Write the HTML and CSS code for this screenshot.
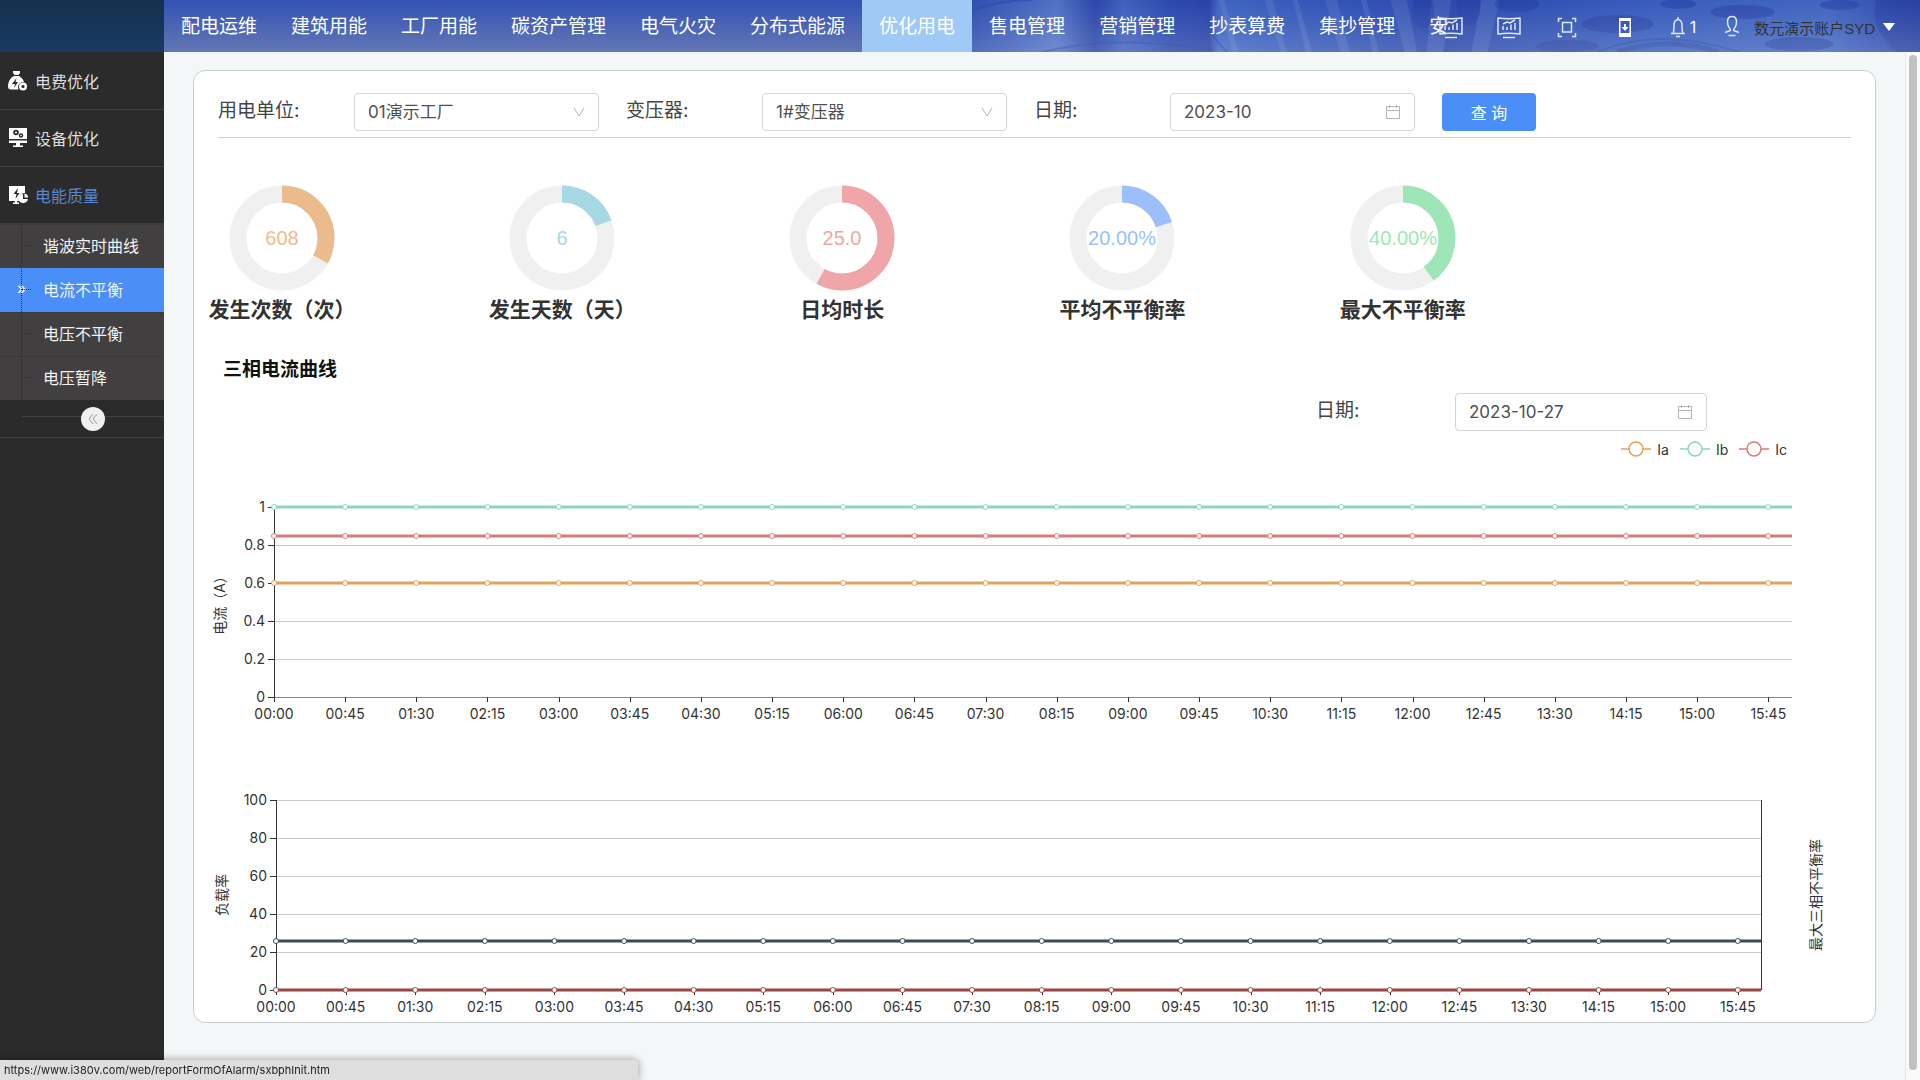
FILE: index.html
```
<!DOCTYPE html>
<html lang="zh-CN">
<head>
    <meta charset="UTF-8">
    <meta name="viewport" content="width=device-width, initial-scale=1.0">
    <title>电流不平衡</title>
    <link rel="stylesheet" href="styles.css">
</head>
<body>
    <header class="header">
        <div class="logo"></div>
        <div class="header-bar">
            <svg class="header-art" viewBox="0 0 940 52" preserveAspectRatio="none" aria-hidden="true">
                <defs>
                    <linearGradient id="artBase" x1="0" y1="0" x2="1" y2="0">
                        <stop offset="0" stop-color="#3554b4"/>
                        <stop offset="0.09" stop-color="#6285d2"/>
                        <stop offset="0.13" stop-color="#2c48aa"/>
                        <stop offset="0.16" stop-color="#4a6cc6"/>
                        <stop offset="0.21" stop-color="#2c4db2"/>
                        <stop offset="0.25" stop-color="#2b42a8"/>
                        <stop offset="0.26" stop-color="#4a74cc"/>
                        <stop offset="0.34" stop-color="#3d62c2"/>
                        <stop offset="0.5" stop-color="#2c4ab0"/>
                        <stop offset="0.7" stop-color="#3f66c4"/>
                        <stop offset="0.9" stop-color="#4d74cb"/>
                        <stop offset="1" stop-color="#3046a5"/>
                    </linearGradient>
                    <linearGradient id="artShade" x1="0" y1="0" x2="0" y2="1">
                        <stop offset="0" stop-color="#2440a8" stop-opacity="0.3"/>
                        <stop offset="1" stop-color="#8c9ccc" stop-opacity="0.35"/>
                    </linearGradient>
                </defs>
                <rect width="940" height="52" fill="url(#artBase)"/>
                <g fill="#a9bdea" opacity="0.2">
                    <path d="M245 0h5l14 52h-6z"/>
                    <path d="M290 0h8l14 52h-6z"/>
                    <path d="M318 0h5l14 52h-6z"/>
                    <path d="M350 0h12l12 52h-9z"/>
                    <path d="M386 0h5l12 52h-6z"/>
                    <path d="M415 0h16l10 52h-12z"/>
                    <path d="M455 0h20l-8 52h-16z"/>
                    <path d="M505 0h18l-12 52h-16z"/>
                </g>
                <g fill="#243c9e" opacity="0.5">
                    <ellipse cx="447" cy="10" rx="11" ry="18"/>
                    <ellipse cx="492" cy="8" rx="12" ry="17"/>
                    <ellipse cx="540" cy="4" rx="22" ry="8"/>
                    <ellipse cx="640" cy="24" rx="36" ry="9"/>
                    <ellipse cx="590" cy="46" rx="32" ry="6"/>
                    <ellipse cx="764" cy="12" rx="32" ry="7"/>
                    <ellipse cx="700" cy="4" rx="18" ry="5"/>
                    <ellipse cx="820" cy="44" rx="34" ry="7"/>
                    <ellipse cx="860" cy="5" rx="20" ry="5"/>
                    <path d="M896 0h44v52h-22q-28-20-22-52z"/>
                </g>
                <g fill="none" stroke="#253f9f" stroke-width="2" opacity="0.45">
                    <path d="M70 52q70-18 170-2"/>
                    <path d="M225 0q8 34 28 52"/>
                    <path d="M620 52q60-26 140 0"/>
                    <path d="M640 52q50-16 100 0" stroke-width="5"/>
                    <path d="M0 10q30-10 60-10"/>
                </g>
                <rect width="940" height="52" fill="url(#artShade)"/>
            </svg>
            <nav class="top-nav">
                <a href="#">配电运维</a>
                <a href="#">建筑用能</a>
                <a href="#">工厂用能</a>
                <a href="#">碳资产管理</a>
                <a href="#">电气火灾</a>
                <a href="#">分布式能源</a>
                <a href="#" class="active">优化用电</a>
                <a href="#">售电管理</a>
                <a href="#">营销管理</a>
                <a href="#">抄表算费</a>
                <a href="#">集抄管理</a>
                <a href="#">安</a>
            </nav>
            <div class="tools">
                <a href="#" class="tool" aria-label="大屏一">
                    <svg viewBox="0 0 24 24"><use href="#icon-screen"/></svg>
                </a>
                <a href="#" class="tool" aria-label="大屏二">
                    <svg viewBox="0 0 24 24"><use href="#icon-screen"/></svg>
                </a>
                <a href="#" class="tool" aria-label="全屏">
                    <svg viewBox="0 0 24 24"><path d="M3.5 7V3.5H7M17 3.5h3.500V7M20.500 18v3.500H17M7 21.500H3.500V18M7.500 7.500h9v9.500h-9z"/></svg>
                </a>
                <a href="#" class="tool" aria-label="下载">
                    <svg viewBox="0 0 24 24"><path class="solid" fill-rule="evenodd" d="M6 3h12v19H6zM7.500 6v12h9V6z"/><path class="solid" d="M11 9h2v3h2.500L12 16l-3.500-4H11z"/></svg>
                </a>
                <a href="#" class="bell" aria-label="告警">
                    <svg viewBox="0 0 14 24"><path d="M7 2v2.500M0 18.500h14M2 18.500q1-2 1-8 0-5.500 4-6 4 .5 4 6 0 6 1 8M5 21.500h4"/></svg>
                    <span>1</span>
                </a>
                <a href="#" class="user">
                    <svg viewBox="0 0 16 24"><path d="M6.300 14C4 12 3.500 9.500 3.500 6.500 3.500 3 5.500 1.500 8 1.500s4.500 1.500 4.500 5c0 3-.5 5.500-2.800 7.500M6.300 14v1.500L1 17.500M9.700 14v1.500l5.300 2M4.500 20.500h7"/></svg>
                    <span class="user-name">数元演示账户SYD</span>
                    <i class="caret"></i>
                </a>
            </div>
        </div>
    </header>

    <div class="layout">
        <aside class="sidebar">
            <ul class="menu">
                <li>
                    <a href="#" class="menu-item">
                        <svg viewBox="0 0 20 20"><path d="M5 0h7v2l-1.500 2h-4L5 2z"/><path d="M6 5h5c3 2 4.500 4 5 6-4-.5-7 3-5.500 7.500H3c-2 0-3-1-3-3C0 11 2 7 6 5z"/><path class="cut" d="M8.500 7L4 13h3l-1 4 4-6H7.500z"/><circle cx="15" cy="15.500" r="4"/><circle class="cut" cx="15" cy="15.500" r="1.600"/></svg>
                        <span>电费优化</span>
                    </a>
                </li>
                <li>
                    <a href="#" class="menu-item">
                        <svg viewBox="0 0 20 20"><path d="M1 0h18v11H1zM1 12.500h18V15h-7v2.500h3V19H5v-1.500h3V15H1z"/><circle class="cut" cx="8" cy="4.500" r="2.800"/><circle cx="8" cy="4.500" r="1"/><circle class="cut" cx="13" cy="7.500" r="2.200"/><circle cx="13" cy="7.500" r=".8"/></svg>
                        <span>设备优化</span>
                    </a>
                </li>
                <li>
                    <a href="#" class="menu-item current">
                        <svg viewBox="0 0 20 20"><path d="M1 1h16v7c-5 0-7.500 4-6 8H9v1.500h2V19H5v-1.500h2V16H1z"/><path class="cut" d="M10 3L5.500 9h3l-1 5 4-6H9z"/><path d="M15 9v5h5a5 4.500 0 1 1-5-5z"/><path d="M16.500 8.500a4 4 0 0 1 3.500 4h-3.500z"/></svg>
                        <span>电能质量</span>
                    </a>
                    <ul class="submenu">
                        <li><a href="#">谐波实时曲线</a></li>
                        <li class="active"><a href="#">电流不平衡</a><span class="mark">»</span></li>
                        <li><a href="#">电压不平衡</a></li>
                        <li><a href="#">电压暂降</a></li>
                    </ul>
                </li>
            </ul>
            <div class="collapse">
                <button type="button" aria-label="收起菜单">
                    <svg viewBox="0 0 12 12"><path d="M6 1L2 6l4 5M10 1L6 6l4 5"/></svg>
                </button>
            </div>
        </aside>

        <main class="main">
            <div class="card">
                <form class="filters">
                    <label for="unit">用电单位:</label>
                    <div class="field">
                        <select id="unit"><option>01演示工厂</option></select>
                        <svg class="arrow" viewBox="0 0 12 12"><path d="M1 2l5 8 5-8"/></svg>
                    </div>
                    <label for="transformer">变压器:</label>
                    <div class="field">
                        <select id="transformer"><option>1#变压器</option></select>
                        <svg class="arrow" viewBox="0 0 12 12"><path d="M1 2l5 8 5-8"/></svg>
                    </div>
                    <label for="month">日期:</label>
                    <div class="field">
                        <input type="text" id="month" value="2023-10">
                        <svg class="calendar" viewBox="0 0 16 16"><path d="M1.500 2.500h13v12h-13zM1.500 6.500h13M4.500 1v3M11.500 1v3"/></svg>
                    </div>
                    <button type="button">查 询</button>
                </form>

                <div class="stats" id="stats"></div>

                <h2>三相电流曲线</h2>

                <div class="day-row">
                    <label for="day">日期:</label>
                    <div class="field">
                        <input type="text" id="day" value="2023-10-27">
                        <svg class="calendar" viewBox="0 0 16 16"><path d="M1.500 2.500h13v12h-13zM1.500 6.500h13M4.500 1v3M11.500 1v3"/></svg>
                    </div>
                </div>

                <div class="legend">
                    <span class="ia"><svg viewBox="0 0 30 20"><path d="M0 10h30"/><circle cx="15" cy="10" r="7"/></svg>Ia</span>
                    <span class="ib"><svg viewBox="0 0 30 20"><path d="M0 10h30"/><circle cx="15" cy="10" r="7"/></svg>Ib</span>
                    <span class="ic"><svg viewBox="0 0 30 20"><path d="M0 10h30"/><circle cx="15" cy="10" r="7"/></svg>Ic</span>
                </div>

                <svg class="chart" id="currentChart"></svg>
                <svg class="chart" id="loadChart"></svg>
            </div>
        </main>
        <div class="scrollbar"><div class="thumb"></div></div>
    </div>

    <div class="status">https://www.i380v.com/web/reportFormOfAlarm/sxbphInit.htm</div>

    <svg class="sprite" aria-hidden="true">
        <symbol id="icon-screen" viewBox="0 0 24 24">
            <path d="M1 3q11 1.500 22 0v16q-11-1.500-22 0zM6 22.500h12M6 15v-4M10 15v-3M14 15V9.500M18 15V8M6 9l4-2 3 1 5-3"/>
        </symbol>
    </svg>

    <script>
        var stats = [
            { name: "发生次数（次）", value: "608", ratio: 0.33, color: "#ecbb8d" },
            { name: "发生天数（天）", value: "6", ratio: 0.195, color: "#a6d9e4" },
            { name: "日均时长", value: "25.0", ratio: 0.58, color: "#f0a6a8" },
            { name: "平均不平衡率", value: "20.00%", ratio: 0.2, color: "#9bbffa" },
            { name: "最大不平衡率", value: "40.00%", ratio: 0.4, color: "#9ee6b8" }
        ];

        function drawStats() {
            var html = "";
            var len = 2 * Math.PI * 44;
            stats.forEach(function(item) {
                html += `<div class="stat">
                    <svg viewBox="0 0 106 106">
                        <circle class="ring" cx="53" cy="53" r="44"/>
                        <circle class="ring" cx="53" cy="53" r="44" style="stroke:${item.color}" stroke-dasharray="${item.ratio * len} ${len}" transform="rotate(-90 53 53)"/>
                        <text x="53" y="60" style="fill:${item.color}">${item.value}</text>
                    </svg>
                    <p>${item.name}</p>
                </div>`;
            });
            document.getElementById("stats").innerHTML = html;
        }

        // one point every 15 minutes, 00:00 - 16:00
        var steps = 64;

        function timeLabel(i) {
            var m = i * 15;
            return String(Math.floor(m / 60)).padStart(2, "0") + ":" + String(m % 60).padStart(2, "0");
        }

        function drawChart(id, opt) {
            var svg = document.getElementById(id);
            var left = opt.left;
            var right = svg.clientWidth - opt.right;
            var top = opt.top;
            var bottom = top + 190;
            var mid = (top + bottom) / 2;
            var out = "";

            opt.ticks.forEach(function(t, i) {
                var y = Math.round(bottom - 190 * i / (opt.ticks.length - 1));
                if (i > 0) {
                    out += `<path class="grid" d="M${left} ${y}H${right}"/>`;
                }
                out += `<path class="axis" d="M${left - 6} ${y}H${left}"/>`;
                out += `<text class="y-label" x="${left - 9}" y="${y + 5}">${t}</text>`;
            });

            out += `<path class="base" d="M${left} ${bottom}H${right}"/>`;
            out += `<path class="axis" d="M${left} ${top}V${bottom}"/>`;
            if (opt.rightName) {
                out += `<path class="axis" d="M${right} ${top}V${bottom}"/>`;
            }

            for (var i = 0; i < steps; i += 3) {
                var x = left + (right - left) * i / steps;
                out += `<path class="axis" d="M${Math.round(x)} ${bottom}v5"/>`;
                out += `<text class="x-label" x="${x}" y="${bottom + 22}">${timeLabel(i)}</text>`;
            }

            opt.series.forEach(function(s) {
                var y = Math.round(bottom - 190 * s.value / opt.max);
                out += `<g class="series" style="stroke:${s.color}"><path d="M${left} ${y}H${right}"/>`;
                for (var i = 0; i < steps; i += 3) {
                    out += `<circle cx="${left + (right - left) * i / steps}" cy="${y}" r="2.500"/>`;
                }
                out += `</g>`;
            });

            out += `<text class="x-label" transform="translate(${left - 49} ${mid}) rotate(-90)">${opt.leftName}</text>`;
            if (opt.rightName) {
                out += `<text class="x-label" transform="translate(${right + 60} ${mid}) rotate(-90)">${opt.rightName}</text>`;
            }
            svg.innerHTML = out;
        }

        function drawAll() {
            drawChart("currentChart", {
                left: 80, right: 83, top: 48, max: 1,
                ticks: ["0", "0.2", "0.4", "0.6", "0.8", "1"],
                leftName: "电流（A）",
                series: [
                    { value: 0.6, color: "#e3a159" },
                    { value: 1, color: "#8ad5c3" },
                    { value: 0.85, color: "#d97b7a" }
                ]
            });
            drawChart("loadChart", {
                left: 82, right: 114, top: 60, max: 100,
                ticks: ["0", "20", "40", "60", "80", "100"],
                leftName: "负载率",
                rightName: "最大三相不平衡率",
                series: [
                    { value: 0, color: "#984746" },
                    { value: 26, color: "#3b4b5a" }
                ]
            });
        }

        drawStats();
        drawAll();
        window.addEventListener("resize", drawAll);
    </script>
</body>
</html>
```

FILE: styles.css
```
* {
    box-sizing: border-box;
}
body {
    margin: 0;
    min-height: 100vh;
    display: flex;
    flex-direction: column;
    font-family: Inter, "Noto Sans CJK SC", sans-serif;
    font-size: 16px;
    color: #444;
    background-color: #f3f7f8;
}
a {
    color: inherit;
    text-decoration: none;
}
ul {
    list-style: none;
    margin: 0;
    padding: 0;
}

/* header */
.header {
    display: flex;
    height: 52px;
}
.logo {
    width: 164px;
    background: linear-gradient(#14304d, #1a3a63);
}
.header-bar {
    flex: 1;
    min-width: 0;
    position: relative;
    background: linear-gradient(#3352b4, #6377b5);
}
.header-art {
    position: absolute;
    right: 0;
    top: 0;
    width: 54%;
    height: 100%;
}
.top-nav {
    position: relative;
    display: flex;
    overflow: hidden;
}
.top-nav a {
    flex: none;
    height: 52px;
    padding: 0 17px;
    font-size: 19px;
    line-height: 54px;
    color: #fff;
}
.top-nav .active {
    background-color: #9fc9f6;
}
.tools {
    position: absolute;
    right: 25px;
    top: 0;
    height: 54px;
    display: flex;
    align-items: center;
    gap: 34px;
    color: #fff;
}
.tools svg {
    display: block;
    height: 24px;
    fill: none;
    stroke: #dfe6f7;
    stroke-width: 1.5;
}
.tools svg .solid {
    fill: #fff;
    stroke: none;
}
.bell, .user {
    display: flex;
    align-items: center;
}
.bell {
    gap: 5px;
    margin-right: -6px;
}
.user-name {
    margin: 0 8px 0 14px;
    white-space: nowrap;
    font-size: 15px;
    font-family: "Liberation Sans", "Noto Sans CJK SC", sans-serif;
    color: #333;
}
.caret {
    border: 6px solid transparent;
    border-top: 8px solid #fff;
    border-bottom: 0;
}

/* sidebar */
.layout {
    flex: 1;
    display: flex;
}
.sidebar {
    flex: none;
    width: 164px;
    background-color: #2b2b2b;
}
.menu {
    padding-top: 1px;
}
.menu > li + li {
    border-top: 1px solid #414141;
}
.menu-item {
    display: flex;
    align-items: center;
    gap: 7px;
    height: 56px;
    padding-left: 8px;
    color: #ddd;
}
.menu-item svg {
    width: 20px;
    height: 20px;
    fill: #fff;
}
.menu-item .cut {
    fill: #2b2b2b;
}
.menu-item.current {
    color: #5b87d2;
}
.submenu {
    padding-top: 1px;
    background-color: #413f40;
}
.submenu li {
    position: relative;
    height: 44px;
    line-height: 42px;
    padding-left: 43px;
    color: #f2f2f2;
    border-top: 1px solid #393738;
}
.submenu li::before {
    content: "";
    position: absolute;
    left: 21px;
    top: 0;
    height: 100%;
    border-left: 1px dotted #2b2b2b;
}
.submenu li::after {
    content: "";
    position: absolute;
    left: 21px;
    top: 20px;
    width: 10px;
    border-top: 1px dotted #2b2b2b;
}
.submenu .active {
    background-color: #498ff7;
    border-top-color: #498ff7;
}
.submenu .mark {
    position: absolute;
    left: 17px;
    top: -2px;
    color: #fff;
}
.collapse {
    display: flex;
    justify-content: center;
    position: relative;
    height: 38px;
    padding: 7px 0 0 22px;
    border-bottom: 1px solid #414141;
}
.collapse::before {
    content: "";
    position: absolute;
    left: 22px;
    right: 0;
    top: 16px;
    border-top: 1px solid #414141;
}
.collapse button {
    position: relative;
    display: flex;
    align-items: center;
    justify-content: center;
    width: 24px;
    height: 24px;
    padding: 0;
    border: none;
    border-radius: 50%;
    background-color: #f0f0f0;
}
.collapse svg {
    width: 12px;
    height: 12px;
    fill: none;
    stroke: #999;
}

/* content */
.main {
    flex: 1;
    min-width: 0;
    padding: 18px 29px 57px;
}
.card {
    padding-bottom: 1px;
    background-color: #fff;
    border: 1px solid #c9cecf;
    border-radius: 12px;
}
.filters {
    display: flex;
    margin: 0 24px;
    padding: 22px 0 6px;
    border-bottom: 1px solid #ccd1d2;
}
.filters label, .day-row label {
    width: 136px;
    font-size: 19px;
    line-height: 36px;
}
.field {
    position: relative;
    width: 245px;
    margin-right: 27px;
}
.field select, .field input {
    display: block;
    width: 100%;
    height: 38px;
    padding: 0 13px;
    border: 1px solid #d4d4d4;
    border-radius: 4px;
    background-color: #fff;
    font-family: inherit;
    font-size: 17px;
    color: #505050;
    appearance: none;
}
.field svg {
    position: absolute;
    fill: none;
    stroke: #b5b5b5;
}
.arrow {
    right: 14px;
    top: 13px;
    width: 12px;
    height: 12px;
}
.calendar {
    right: 14px;
    top: 11px;
    width: 16px;
    height: 16px;
}
.filters button {
    width: 94px;
    height: 38px;
    border: none;
    border-radius: 4px;
    background-color: #498ff7;
    font-family: inherit;
    font-size: 16px;
    color: #fff;
}
.stats {
    display: grid;
    grid-template-columns: repeat(6, 1fr);
    margin-top: 47px;
}
.stat {
    width: 176px;
    text-align: center;
}
.stat svg {
    display: block;
    width: 106px;
    height: 106px;
    margin: 0 auto;
}
.stat text {
    font-family: "Liberation Sans", sans-serif;
    font-size: 20px;
    text-anchor: middle;
}
.ring {
    fill: none;
    stroke: #f0f0f0;
    stroke-width: 17;
}
.stat p {
    margin: 4px 0 0;
    font-size: 21px;
    font-weight: bold;
    line-height: 30px;
    white-space: nowrap;
    color: #333;
}
h2 {
    margin: 33px 0 0 29px;
    font-size: 19px;
    line-height: 24px;
    color: #111;
}
.day-row {
    display: flex;
    justify-content: flex-end;
    margin: 11px 168px 0 0;
}
.day-row label {
    width: 139px;
}
.day-row .field {
    width: 252px;
    margin: 0;
}
.legend {
    display: flex;
    justify-content: flex-end;
    gap: 11px;
    margin: 8px 88px 0 0;
    font-size: 14px;
    line-height: 22px;
    height: 20px;
    color: #333;
}
.legend span {
    display: flex;
    gap: 6px;
}
.legend svg {
    width: 30px;
    height: 20px;
    fill: #fff;
    stroke-width: 1.5;
}
.ia svg {
    stroke: #e3a159;
}
.ib svg {
    stroke: #8ad5c3;
}
.ic svg {
    stroke: #d97b7a;
}
.chart {
    display: block;
    width: 100%;
    height: 281px;
    font-size: 14px;
    fill: #333;
}
.grid, .axis, .base {
    fill: none;
    shape-rendering: crispEdges;
}
.grid {
    stroke: #ccc;
}
.axis {
    stroke: #333;
}
.base {
    stroke: #888;
}
.x-label {
    text-anchor: middle;
}
.y-label {
    text-anchor: end;
}
.series path {
    stroke-width: 3;
}
.series circle {
    fill: #fff;
    stroke-width: 1;
}

/* window chrome */
.scrollbar {
    flex: none;
    width: 15px;
    padding: 3px 3px 10px;
    display: flex;
    background-color: #fafafa;
    border-left: 1px solid #e4e8e8;
}
.thumb {
    width: 8px;
    border-radius: 4px;
    background-color: #c1c1c1;
}
.status {
    position: fixed;
    left: 0;
    bottom: 0;
    width: 638px;
    padding-left: 4px;
    font-size: 11px;
    line-height: 20px;
    color: #222;
    background-color: #dedede;
    border-top-right-radius: 4px;
    box-shadow: 0 0 8px rgba(0, 0, 0, 0.4);
}
.sprite {
    position: absolute;
    width: 0;
    height: 0;
}
```
